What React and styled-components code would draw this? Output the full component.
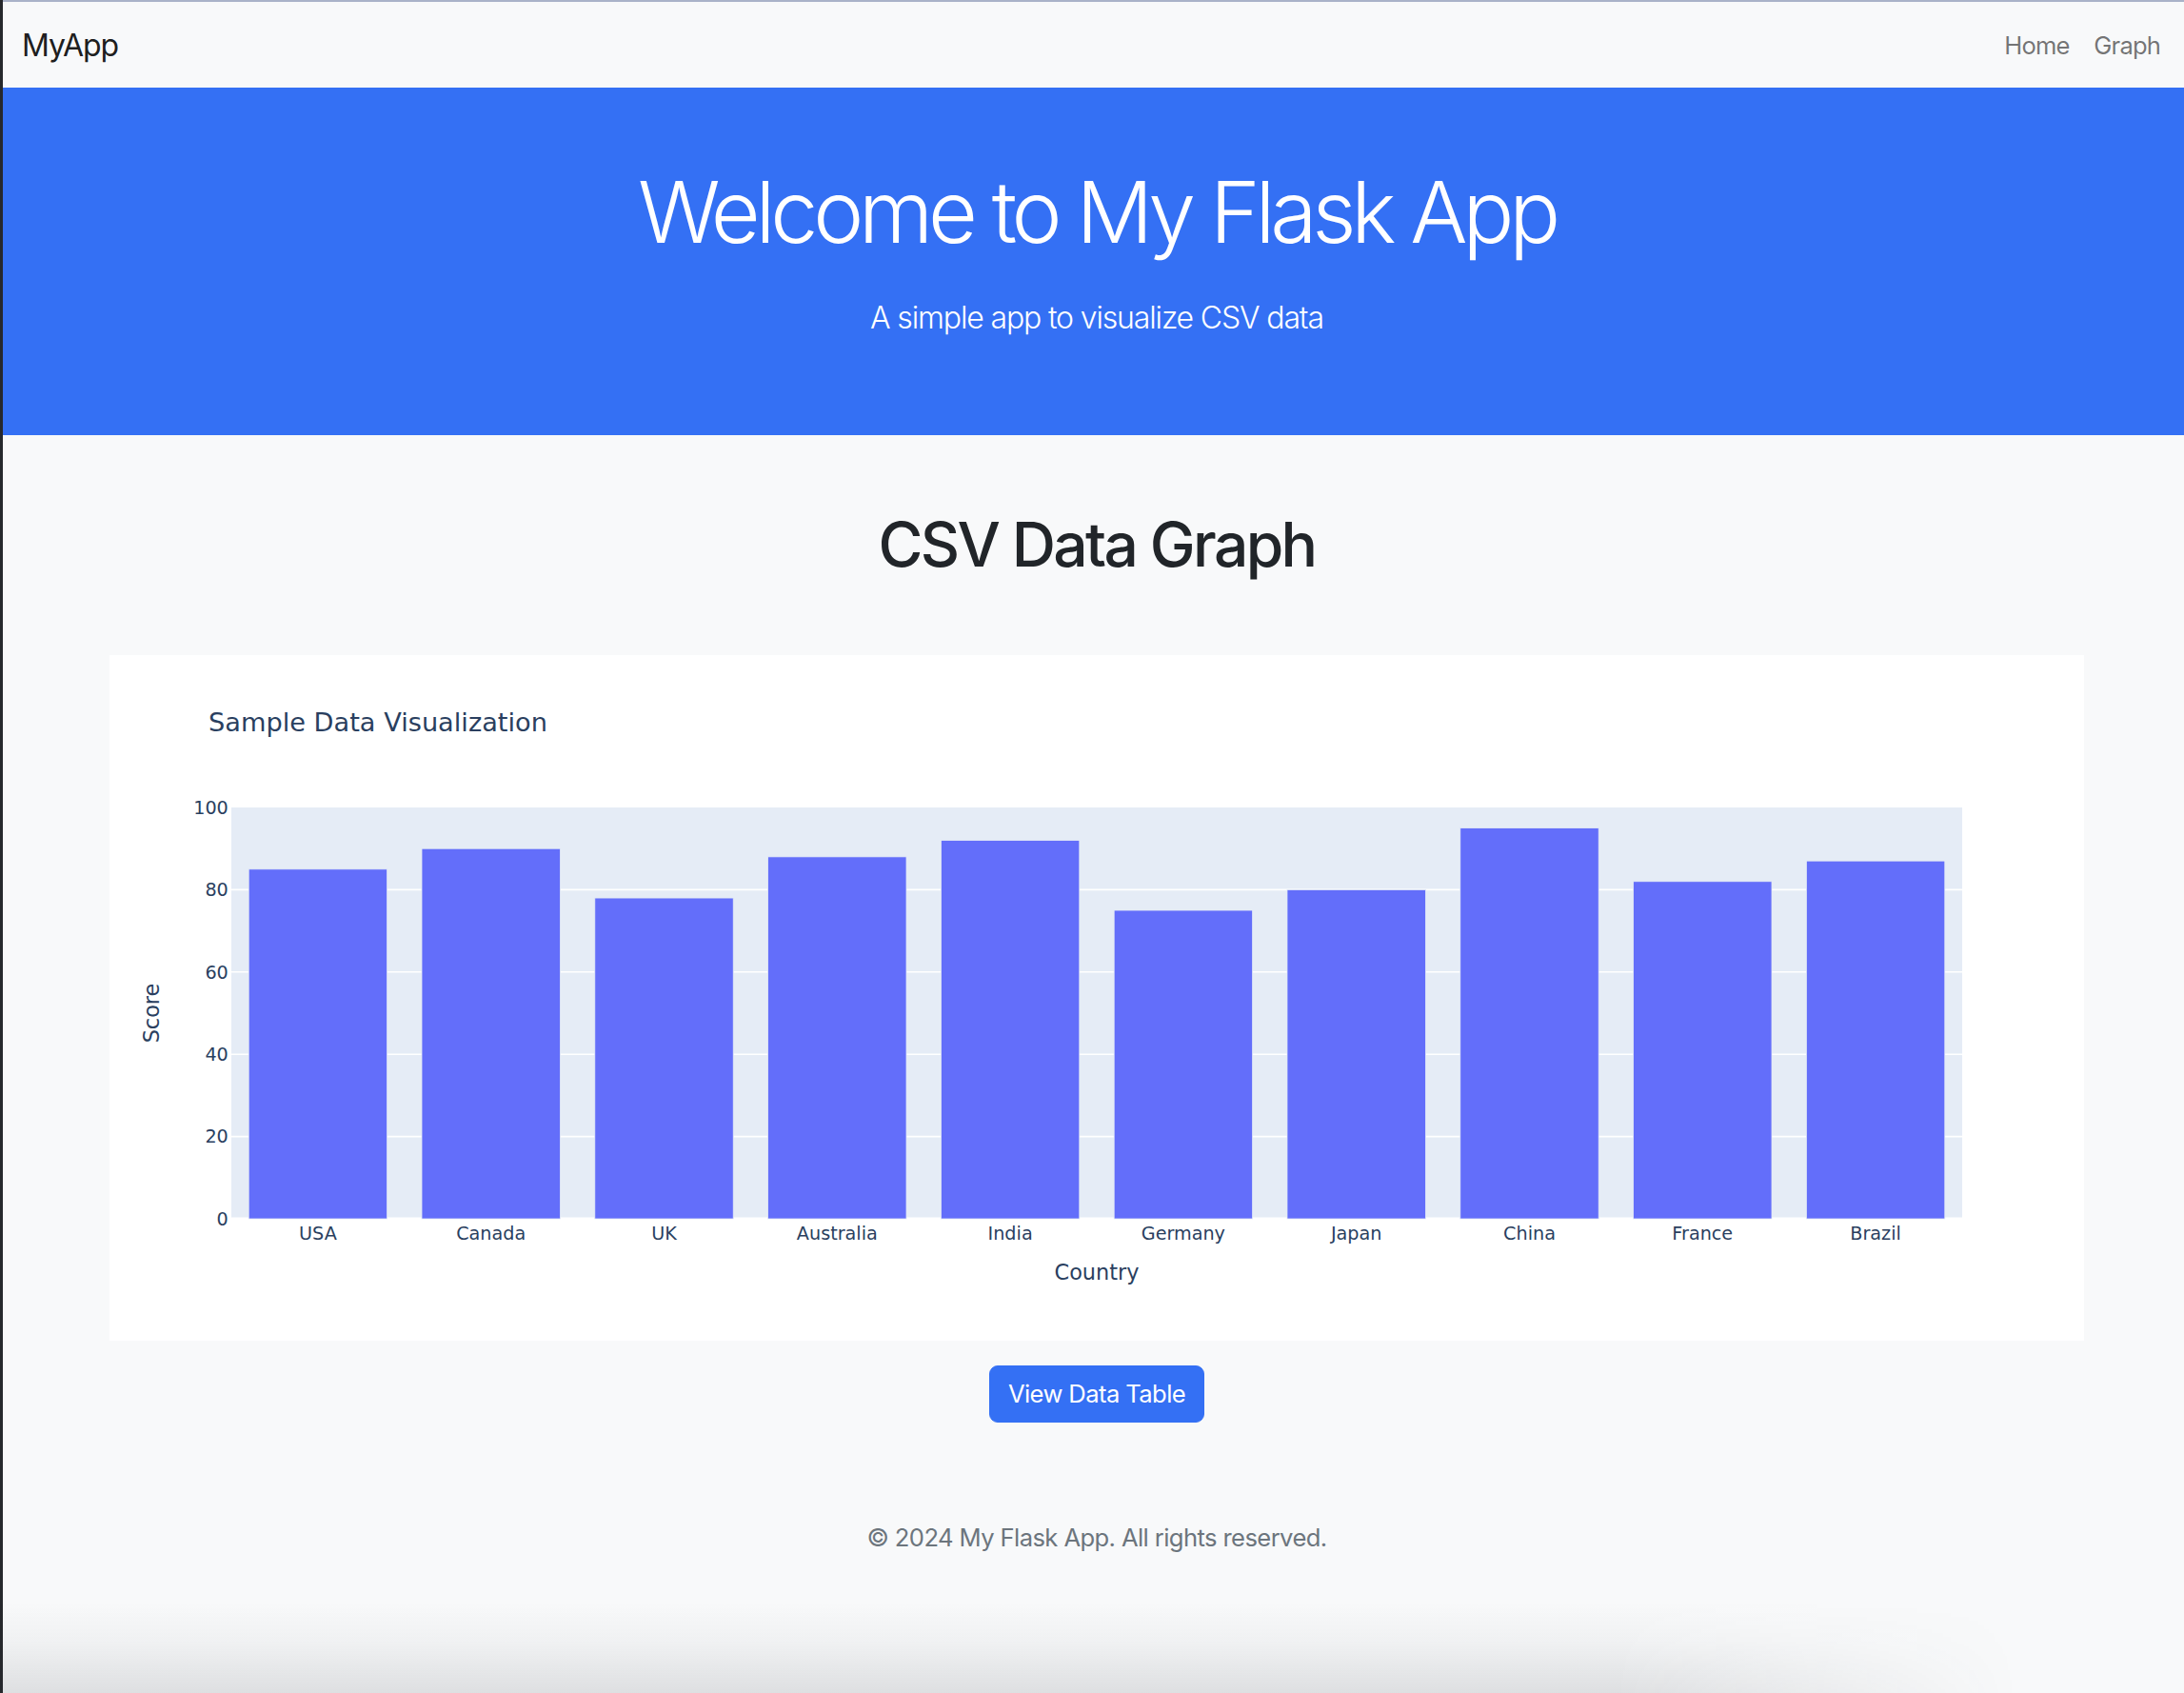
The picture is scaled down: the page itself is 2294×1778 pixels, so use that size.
import React from "react";
import styled, { createGlobalStyle } from "styled-components";

const data = [
  ["USA", 85],
  ["Canada", 90],
  ["UK", 78],
  ["Australia", 88],
  ["India", 92],
  ["Germany", 75],
  ["Japan", 80],
  ["China", 95],
  ["France", 82],
  ["Brazil", 87],
];

// plot area in plotly css units (chart is 1296x450)
const PX = 80;
const PY = 100;
const PW = 1136;
const PH = 270;
const yOf = (v) => PY + PH - (v / 100) * PH;

const GlobalStyle = createGlobalStyle`
  html, body {
    margin: 0;
    padding: 0;
    background: #2b2c2e;
    overflow: hidden;
  }
  * { box-sizing: border-box; }
`;

const Screen = styled.div`
  position: relative;
  display: flex;
  height: 1778px;
  overflow: hidden;
`;

const DesktopStrip = styled.div`
  width: 3px;
  flex-shrink: 0;
  background: #26282c;
`;

const Page = styled.div`
  width: 2298px;
  flex-shrink: 0;
  background: #f8f9fa;
  border-top: 2px solid #a9b2c8;
  font-family: Inter, "Liberation Sans", sans-serif;
  color: #212529;
`;

const Navbar = styled.nav`
  height: 90px;
  display: flex;
  align-items: center;
  justify-content: space-between;
  padding: 0 19px 0 20px;
`;

const Brand = styled.a`
  font-size: 32px;
  color: rgba(0, 0, 0, 0.9);
  text-decoration: none;
  letter-spacing: -1px;
`;

const NavLinks = styled.div`
  display: flex;
`;

const NavLink = styled.a`
  font-size: 25.6px;
  padding: 0 12.8px;
  color: rgba(0, 0, 0, 0.55);
  text-decoration: none;
  letter-spacing: -0.8px;
`;

const Hero = styled.header`
  background: #3470f4;
  color: #fff;
  text-align: center;
  padding: 77px 0 99px;
`;

const HeroTitle = styled.h1`
  margin: 0 0 33px;
  font-size: 89.6px;
  font-weight: 300;
  line-height: 1.2;
  letter-spacing: -5.2px;
`;

const Lead = styled.p`
  margin: 0;
  font-size: 32px;
  font-weight: 300;
  line-height: 1.5;
  letter-spacing: -1.15px;
`;

const Container = styled.main`
  width: 2074px;
  margin: 0 auto;
  display: flex;
  flex-direction: column;
  align-items: center;
`;

const SectionTitle = styled.h1`
  margin: 77px 0 78px;
  font-size: 64px;
  font-weight: 500;
  line-height: 1.2;
  letter-spacing: -2.6px;
`;

const ChartCard = styled.div`
  width: 100%;
  height: 720px;
  background: #fff;
`;

const ChartSvg = styled.svg`
  display: block;
  width: 100%;
  height: 100%;
  font-family: "DejaVu Sans", Verdana, sans-serif;
`;

const PlotBg = styled.rect`
  fill: #e5ecf6;
`;

const GridLine = styled.line`
  stroke: #fff;
  stroke-width: ${(p) => (p.$zero ? 2 : 1)};
`;

const Bar = styled.rect`
  fill: #636efa;
  stroke: #e5ecf6;
  stroke-width: 0.5;
`;

const TickLabel = styled.text`
  font-size: 12px;
  fill: #2a3f5f;
`;

const AxisTitle = styled.text`
  font-size: 14px;
  fill: #2a3f5f;
`;

const ChartTitle = styled.text`
  font-size: 17px;
  fill: #2a3f5f;
`;

const Button = styled.button`
  margin-top: 26px;
  font-family: Inter, "Liberation Sans", sans-serif;
  font-size: 25.6px;
  line-height: 1.5;
  padding: 9.6px 19.2px;
  border: 1.6px solid #3470f4;
  border-radius: 9px;
  background: #3470f4;
  color: #fff;
  letter-spacing: -0.6px;
`;

const Footer = styled.footer`
  margin-top: 102px;
  text-align: center;
  font-size: 25.6px;
  line-height: 1.5;
  color: #6c757d;
  letter-spacing: -0.6px;
`;

const DockShadow = styled.div`
  position: absolute;
  left: 0;
  bottom: 0;
  width: 2120px;
  height: 95px;
  pointer-events: none;
  background: linear-gradient(
    to bottom,
    rgba(40, 44, 52, 0) 0%,
    rgba(40, 44, 52, 0.04) 45%,
    rgba(40, 44, 52, 0.12) 100%
  );
  -webkit-mask-image: linear-gradient(to right, #000 80%, transparent 100%);
  mask-image: linear-gradient(to right, #000 80%, transparent 100%);
`;

function BarChart() {
  const step = PW / data.length;
  const barW = step * 0.8;
  return (
    <ChartSvg viewBox="0 0 1296 450" preserveAspectRatio="none">
      <ChartTitle x={65} y={50}>
        Sample Data Visualization
      </ChartTitle>
      <PlotBg x={PX} y={PY} width={PW} height={PH} />
      {[20, 40, 60, 80].map((v) => (
        <GridLine key={v} x1={PX} x2={PX + PW} y1={yOf(v)} y2={yOf(v)} />
      ))}
      <GridLine $zero x1={PX} x2={PX + PW} y1={yOf(0)} y2={yOf(0)} />
      {data.map(([name, value], i) => (
        <Bar
          key={name}
          x={PX + i * step + (step - barW) / 2}
          y={yOf(value)}
          width={barW}
          height={(value / 100) * PH}
        />
      ))}
      {[0, 20, 40, 60, 80, 100].map((v) => (
        <TickLabel key={v} x={78} y={yOf(v)} dy="0.35em" textAnchor="end">
          {v}
        </TickLabel>
      ))}
      {data.map(([name], i) => (
        <TickLabel
          key={name}
          x={PX + i * step + step / 2}
          y={384}
          textAnchor="middle"
        >
          {name}
        </TickLabel>
      ))}
      <AxisTitle x={PX + PW / 2} y={410} textAnchor="middle">
        Country
      </AxisTitle>
      <AxisTitle
        x={0}
        y={0}
        textAnchor="middle"
        transform={`translate(32.5 ${PY + PH / 2}) rotate(-90)`}
      >
        Score
      </AxisTitle>
    </ChartSvg>
  );
}

export default function App() {
  return (
    <>
      <GlobalStyle />
      <Screen>
        <DesktopStrip />
        <Page>
          <Navbar>
            <Brand href="#">MyApp</Brand>
            <NavLinks>
              <NavLink href="#">Home</NavLink>
              <NavLink href="#">Graph</NavLink>
            </NavLinks>
          </Navbar>
          <Hero>
            <HeroTitle>Welcome to My Flask App</HeroTitle>
            <Lead>A simple app to visualize CSV data</Lead>
          </Hero>
          <Container>
            <SectionTitle>CSV Data Graph</SectionTitle>
            <ChartCard>
              <BarChart />
            </ChartCard>
            <Button>View Data Table</Button>
          </Container>
          <Footer>© 2024 My Flask App. All rights reserved.</Footer>
        </Page>
        <DockShadow />
      </Screen>
    </>
  );
}
